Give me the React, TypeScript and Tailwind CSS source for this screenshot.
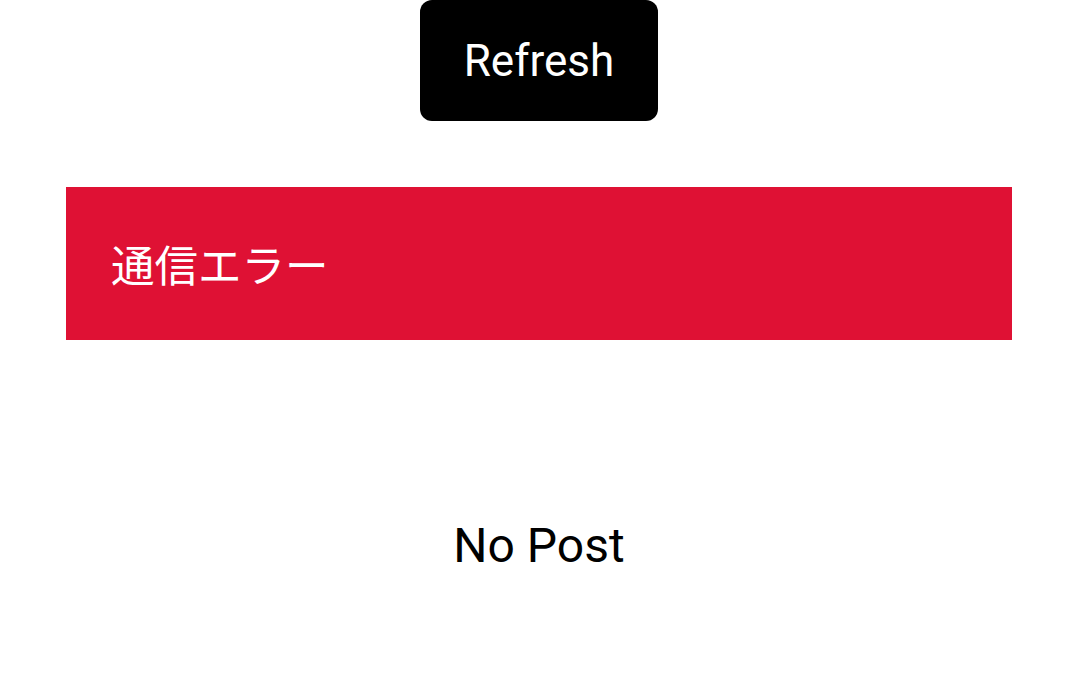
export default function App() {
  return (
    <div className="w-[1078px] h-[684px] bg-white flex flex-col items-center" style={{ fontFamily: 'Roboto, "Noto Sans CJK JP", sans-serif' }}>
      <button className="w-[238px] h-[121px] bg-black text-white rounded-[12px] text-[44px] leading-none flex items-center justify-center">
        Refresh
      </button>
      <div className="mt-[66px] w-[946px] h-[153px] bg-[#df1134] flex items-center pl-[45px]">
        <span className="text-white text-[43.5px] leading-none" style={{ fontFamily: '"Noto Sans CJK JP", sans-serif' }}>通信エラー</span>
      </div>
      <div className="mt-[182px] text-[48px] text-black leading-none">No Post</div>
    </div>
  );
}
